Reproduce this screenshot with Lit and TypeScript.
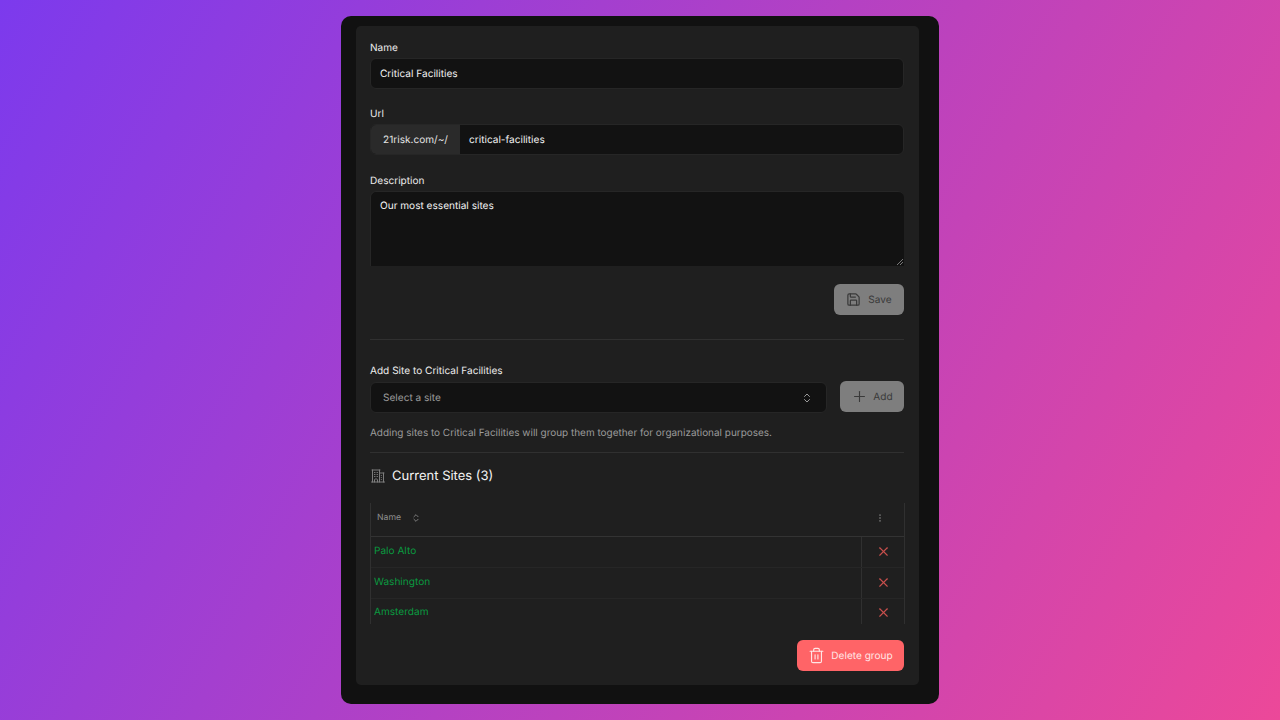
import { LitElement, html, css } from "lit";
import { customElement } from "lit/decorators.js";

const chevrons = html`<svg viewBox="0 0 24 24" fill="none" stroke="currentColor" stroke-width="2" stroke-linecap="round" stroke-linejoin="round"><path d="m7 15 5 5 5-5"/><path d="m7 9 5-5 5 5"/></svg>`;
const cross = html`<svg class="x" viewBox="0 0 24 24" fill="none" stroke="currentColor" stroke-width="1.8" stroke-linecap="round"><path d="M18 6 6 18"/><path d="m6 6 12 12"/></svg>`;

@customElement("app-root")
export class AppRoot extends LitElement {
  static styles = css`
    :host {
      display: flex;
      justify-content: center;
      width: 1280px;
      height: 720px;
      box-sizing: border-box;
      padding-top: 16px;
      background: linear-gradient(120deg, #7c3aed 0%, #ec4899 100%);
      font-family: Inter, "Liberation Sans", sans-serif;
      font-size: 10.08px;
      text-rendering: geometricPrecision;
      color: #f2f2f2;
      overflow: hidden;
    }
    * { box-sizing: border-box; }
    .modal {
      width: 598px;
      height: 688px;
      padding: 10px 20px 19px 15px;
      background: #111111;
      border-radius: 10px;
    }
    .panel {
      height: 100%;
      padding: 15px 15px 14px 14px;
      background: #1f1f1f;
      border-radius: 5px;
      display: flex;
      flex-direction: column;
    }
    .label { height: 12px; line-height: 14px; margin-bottom: 5px; color: #ececec; }
    .field {
      height: 31px;
      background: #121212;
      border-radius: 6px;
      border: 1px solid #262626;
      display: flex;
      align-items: center;
      overflow: hidden;
    }
    .name { padding-left: 9px; margin-bottom: 18px; }
    .url { margin-bottom: 19px; }
    .prefix {
      width: 89px;
      height: 100%;
      background: #2a2a2a;
      display: flex;
      align-items: center;
      padding-left: 12px;
      color: #e4e4e4;
    }
    .slug { padding-left: 9px; }
    .desc {
      height: 75px;
      background: #121212;
      border-radius: 6px 6px 0 0;
      border-left: 1px solid #262626;
      border-top: 1px solid #262626;
      padding: 8px 9px;
      line-height: 12px;
      position: relative;
      margin-bottom: 18px;
    }
    .grip { position: absolute; right: 1px; bottom: 1px; width: 6px; height: 6px; color: #777; }
    .actions { display: flex; justify-content: flex-end; }
    .btn {
      display: flex;
      align-items: center;
      justify-content: center;
      height: 31px;
      border-radius: 6px;
      background: #7e7e7e;
      color: #3a3a3a;
      gap: 7px;
    }
    .btn svg { width: 15px; height: 15px; }
    .save { width: 70px; }
    hr { width: 100%; height: 1px; margin: 0; border: 0; background: #303030; }
    .hr1 { margin-top: 24px; margin-bottom: 25px; }
    .add-label { line-height: 12px; margin-bottom: 5px; }
    .add-row { display: flex; align-items: flex-start; gap: 13px; margin-bottom: 13px; margin-top: -1px; }
    .select {
      flex: 1;
      height: 31px;
      margin-top: 1px;
      background: #121212;
      border-radius: 6px;
      border: 1px solid #262626;
      display: flex;
      align-items: center;
      justify-content: space-between;
      padding: 0 13px 0 12px;
      color: #9a9a9a;
    }
    .select svg { width: 12px; height: 12px; color: #9a9a9a; }
    .add { width: 64px; gap: 5px; }
    .add svg { width: 17px; height: 17px; }
    .help { height: 14px; line-height: 14px; font-size: 9.96px; color: #9b9b9b; margin-bottom: 12px; }
    .heading {
      display: flex;
      align-items: center;
      gap: 6px;
      margin-top: 13px;
      height: 20px;
      font-size: 13px;
      color: #f4f4f4;
    }
    .heading svg { width: 16px; height: 16px; color: #7d7d7d; }
    .table {
      margin-top: 17px;
      margin-right: -1px;
      height: 121px;
      border-left: 1px solid #303030;
      border-right: 1px solid #303030;
      overflow: hidden;
    }
    .head {
      height: 34px;
      border-bottom: 1px solid #333;
      display: flex;
      align-items: center;
      justify-content: space-between;
      padding: 0 19px 4px 6px;
      font-size: 8.7px;
      color: #8d8d8d;
    }
    .sort { display: flex; align-items: center; gap: 10px; }
    .sort svg { width: 10px; height: 10px; }
    .dots { width: 10px; height: 10px; }
    .row { display: flex; height: 30.4px; }
    .row + .row { border-top: 1px solid #262626; }
    .row-name { flex: 1; padding: 0 0 2px 3px; display: flex; align-items: center; color: #0a9a40; }
    .row-x { width: 43px; padding-bottom: 2px; border-left: 1px solid #303030; display: flex; align-items: center; justify-content: center; color: #c9504d; }
    .x { width: 15px; height: 15px; }
    .footer { margin-top: auto; display: flex; justify-content: flex-end; }
    .delete { width: 107px; background: #ff6467; color: #ffe6e6; gap: 6px; }
    .btn.delete svg { width: 17px; height: 17px; }
  `;

  render() {
    const sites = ["Palo Alto", "Washington", "Amsterdam"];
    return html`
      <div class="modal">
        <div class="panel">
          <div class="label">Name</div>
          <div class="field name">Critical Facilities</div>
          <div class="label">Url</div>
          <div class="field url">
            <div class="prefix">21risk.com/~/</div>
            <div class="slug">critical-facilities</div>
          </div>
          <div class="label">Description</div>
          <div class="desc">
            Our most essential sites
            <svg class="grip" viewBox="0 0 6 6" fill="none" stroke="currentColor"><path d="M0 6 6 0M3 6l3-3"/></svg>
          </div>
          <div class="actions">
            <div class="btn save">
              <svg viewBox="0 0 24 24" fill="none" stroke="currentColor" stroke-width="2" stroke-linecap="round" stroke-linejoin="round"><path d="M15.2 3a2 2 0 0 1 1.4.6l3.8 3.8a2 2 0 0 1 .6 1.4V19a2 2 0 0 1-2 2H5a2 2 0 0 1-2-2V5a2 2 0 0 1 2-2z"/><path d="M17 21v-7a1 1 0 0 0-1-1H8a1 1 0 0 0-1 1v7"/><path d="M7 3v4a1 1 0 0 0 1 1h7"/></svg>
              Save
            </div>
          </div>
          <hr class="hr1" />
          <div class="label add-label">Add Site to Critical Facilities</div>
          <div class="add-row">
            <div class="select">Select a site ${chevrons}</div>
            <div class="btn add">
              <svg viewBox="0 0 24 24" fill="none" stroke="currentColor" stroke-width="1.6" stroke-linecap="round"><path d="M5 12h14"/><path d="M12 5v14"/></svg>
              Add
            </div>
          </div>
          <div class="help">Adding sites to Critical Facilities will group them together for organizational purposes.</div>
          <hr />
          <div class="heading">
            <svg viewBox="0 0 24 24" fill="none" stroke="currentColor" stroke-width="1.5" stroke-linecap="round" stroke-linejoin="round"><path d="M2.25 21h19.5m-18-18v18m10.5-18v18m6-13.5V21M6.75 6.75h.75m-.75 3h.75m-.75 3h.75m3-6h.75m-.75 3h.75m-.75 3h.75M6.75 21v-3.375c0-.621.504-1.125 1.125-1.125h2.25c.621 0 1.125.504 1.125 1.125V21M3 3h12m-.75 4.5H21m-3.75 3.75h.008v.008h-.008v-.008Zm0 3h.008v.008h-.008v-.008Zm0 3h.008v.008h-.008v-.008Z"/></svg>
            Current Sites (3)
          </div>
          <div class="table">
            <div class="head">
              <div class="sort">Name ${chevrons}</div>
              <svg class="dots" viewBox="0 0 24 24" fill="none" stroke="currentColor" stroke-width="2"><circle cx="12" cy="5" r="1"/><circle cx="12" cy="12" r="1"/><circle cx="12" cy="19" r="1"/></svg>
            </div>
            ${sites.map((s) => html`<div class="row"><div class="row-name">${s}</div><div class="row-x">${cross}</div></div>`)}
          </div>
          <div class="footer">
            <div class="btn delete">
              <svg viewBox="0 0 24 24" fill="none" stroke="currentColor" stroke-width="1.6" stroke-linecap="round" stroke-linejoin="round"><path d="M3 6h18"/><path d="M19 6v14c0 1-1 2-2 2H7c-1 0-2-1-2-2V6"/><path d="M8 6V4c0-1 1-2 2-2h4c1 0 2 1 2 2v2"/><path d="M10 11v6"/><path d="M14 11v6"/></svg>
              Delete group
            </div>
          </div>
        </div>
      </div>
    `;
  }
}
